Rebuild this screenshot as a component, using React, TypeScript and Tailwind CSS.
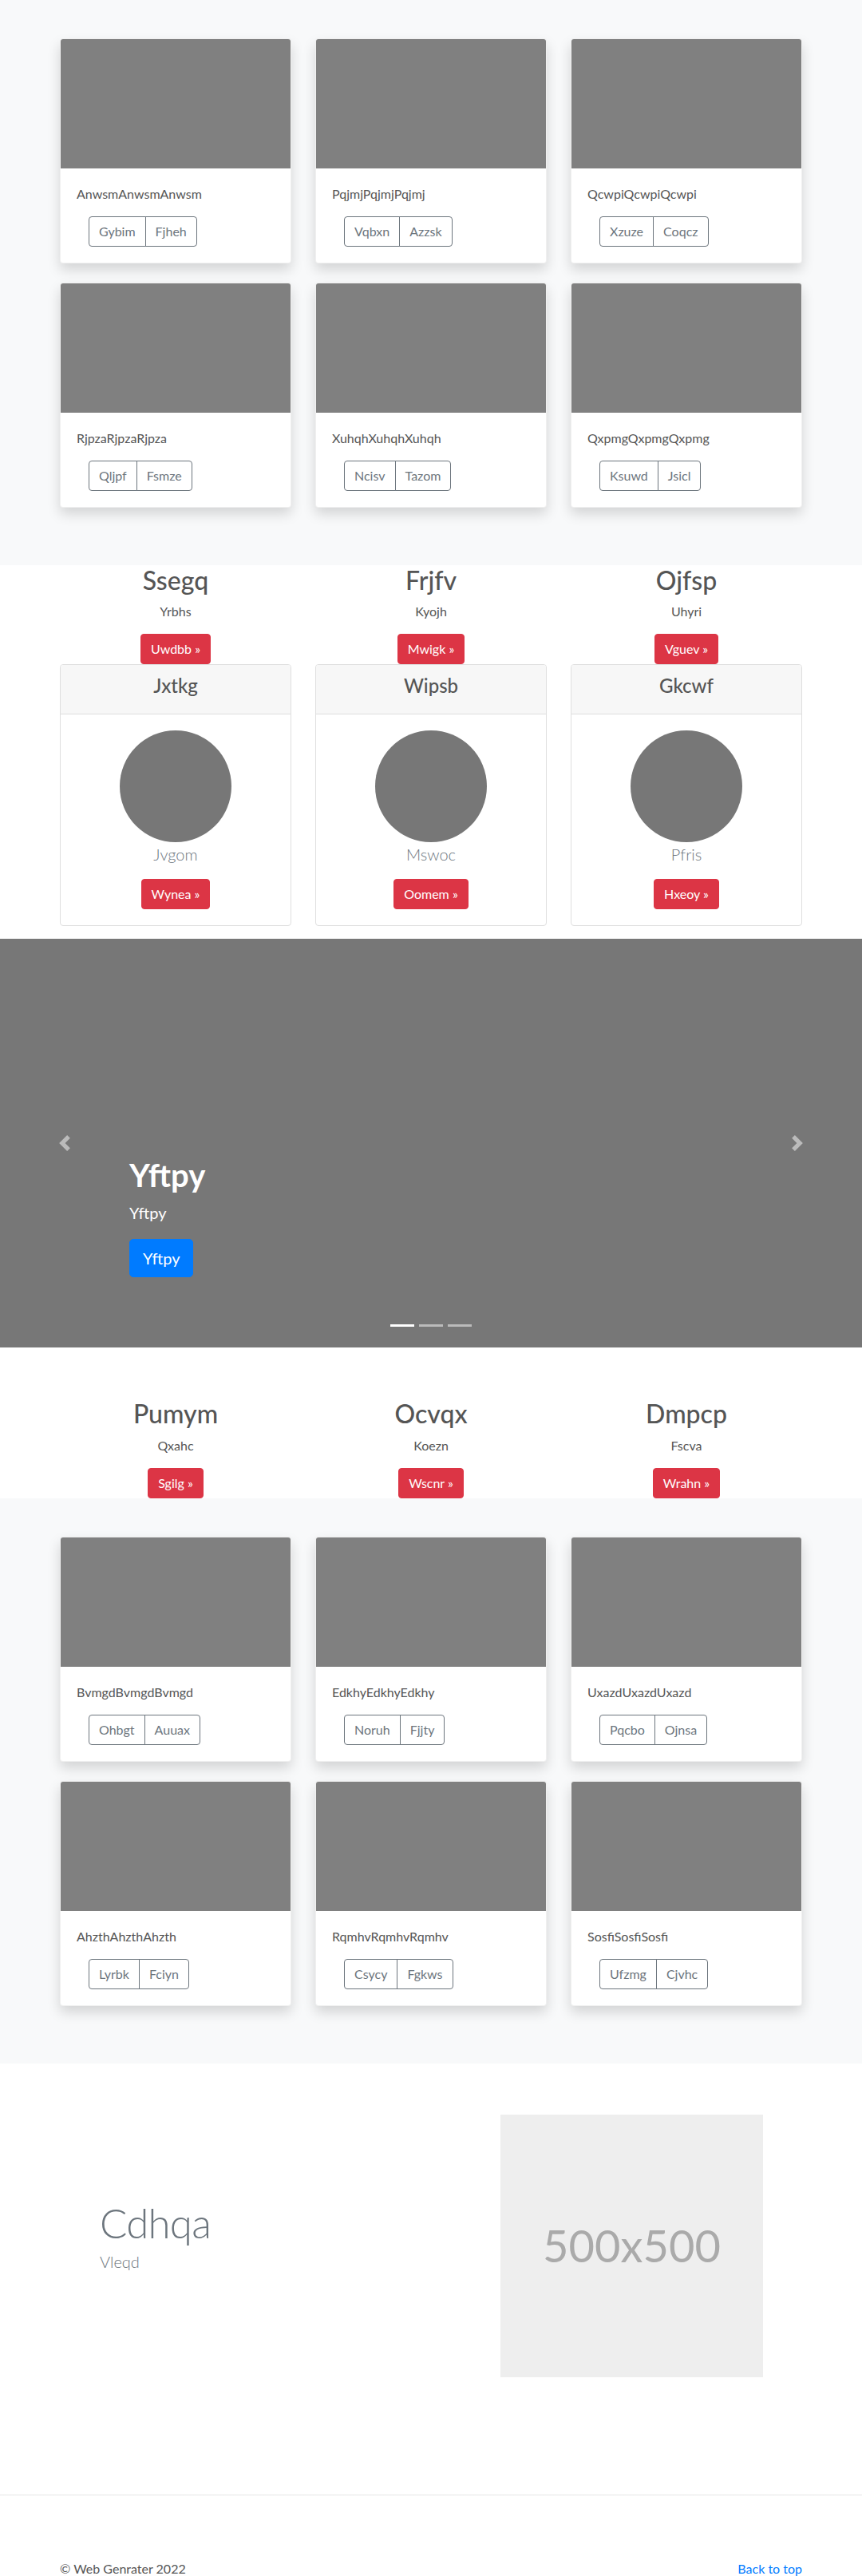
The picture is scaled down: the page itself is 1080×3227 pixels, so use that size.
import React from "react";

const FONT = "font-['Lato','Liberation_Sans',sans-serif]";

type Album = { title: string; a: string; b: string };

const album1: Album[] = [
  { title: "AnwsmAnwsmAnwsm", a: "Gybim", b: "Fjheh" },
  { title: "PqjmjPqjmjPqjmj", a: "Vqbxn", b: "Azzsk" },
  { title: "QcwpiQcwpiQcwpi", a: "Xzuze", b: "Coqcz" },
  { title: "RjpzaRjpzaRjpza", a: "Qljpf", b: "Fsmze" },
  { title: "XuhqhXuhqhXuhqh", a: "Ncisv", b: "Tazom" },
  { title: "QxpmgQxpmgQxpmg", a: "Ksuwd", b: "Jsicl" },
];

const album2: Album[] = [
  { title: "BvmgdBvmgdBvmgd", a: "Ohbgt", b: "Auuax" },
  { title: "EdkhyEdkhyEdkhy", a: "Noruh", b: "Fjjty" },
  { title: "UxazdUxazdUxazd", a: "Pqcbo", b: "Ojnsa" },
  { title: "AhzthAhzthAhzth", a: "Lyrbk", b: "Fciyn" },
  { title: "RqmhvRqmhvRqmhv", a: "Csycy", b: "Fgkws" },
  { title: "SosfiSosfiSosfi", a: "Ufzmg", b: "Cjvhc" },
];

function AlbumCard({ item }: { item: Album }) {
  return (
    <div className="bg-white border border-[rgba(0,0,0,0.06)] rounded-[4px] shadow-[0_8px_16px_rgba(0,0,0,0.15)] overflow-hidden">
      <div className="h-[162px] bg-[#808080]" />
      <div className="p-5">
        <p className="text-base leading-6 text-[#555] mb-4">{item.title}</p>
        <div className="ml-[15px] flex">
          <span className="px-3 py-1.5 text-base leading-6 text-[#6c757d] border border-[#6c757d] rounded-l-[4px]">
            {item.a}
          </span>
          <span className="-ml-px px-3 py-1.5 text-base leading-6 text-[#6c757d] border border-[#6c757d] rounded-r-[4px]">
            {item.b}
          </span>
        </div>
      </div>
    </div>
  );
}

function AlbumSection({ items }: { items: Album[] }) {
  return (
    <section className="bg-[#f8f9fa] pt-12 pb-12">
      <div className="w-[960px] mx-auto px-[15px]">
        <div className="grid grid-cols-3 gap-x-[30px] gap-y-6 pb-6">
          {items.map((it) => (
            <AlbumCard key={it.title} item={it} />
          ))}
        </div>
      </div>
    </section>
  );
}

function RedButton({ label }: { label: string }) {
  return (
    <span className="inline-block px-3 py-1.5 text-base leading-6 text-white bg-[#dc3545] border border-[#dc3545] rounded-[4px]">
      {label} »
    </span>
  );
}

type Feature = { h: string; p: string; btn: string };

function FeatureCol({ f }: { f: Feature }) {
  return (
    <div className="flex flex-col items-center text-center">
      <h2 className="text-[32px] leading-[1.2] font-medium text-[#555] mb-2">{f.h}</h2>
      <p className="text-base leading-6 text-[#555] mb-4">{f.p}</p>
      <RedButton label={f.btn} />
    </div>
  );
}

const features1: (Feature & { ch: string; cp: string; cb: string })[] = [
  { h: "Ssegq", p: "Yrbhs", btn: "Uwdbb", ch: "Jxtkg", cp: "Jvgom", cb: "Wynea" },
  { h: "Frjfv", p: "Kyojh", btn: "Mwigk", ch: "Wipsb", cp: "Mswoc", cb: "Oomem" },
  { h: "Ojfsp", p: "Uhyri", btn: "Vguev", ch: "Gkcwf", cp: "Pfris", cb: "Hxeoy" },
];

const features2: Feature[] = [
  { h: "Pumym", p: "Qxahc", btn: "Sgilg" },
  { h: "Ocvqx", p: "Koezn", btn: "Wscnr" },
  { h: "Dmpcp", p: "Fscva", btn: "Wrahn" },
];

function PrevIcon() {
  return (
    <svg width="20" height="20" viewBox="0 0 8 8" fill="#fff">
      <path d="M5.25 0l-4 4 4 4 1.5-1.5L4.25 4l2.5-2.5L5.25 0z" />
    </svg>
  );
}

function NextIcon() {
  return (
    <svg width="20" height="20" viewBox="0 0 8 8" fill="#fff">
      <path d="M2.75 0l-1.5 1.5L3.75 4l-2.5 2.5L2.75 8l4-4-4-4z" />
    </svg>
  );
}

export default function App() {
  return (
    <div className={`w-[1080px] bg-white ${FONT}`}>
      <AlbumSection items={album1} />

      {/* Features with cards */}
      <section className="bg-white pb-4">
        <div className="w-[960px] mx-auto px-[15px]">
          <div className="grid grid-cols-3 gap-x-[30px]">
            {features1.map((f) => (
              <div key={f.h} className="flex flex-col items-stretch">
                <FeatureCol f={f} />
                <div className="border border-[#dfdfdf] rounded-[4px] bg-white overflow-hidden">
                  <div className="bg-[#f7f7f7] border-b border-[#dfdfdf] px-5 py-3 text-center">
                    <h4 className="text-2xl leading-[1.2] font-medium text-[#555] mb-2">{f.ch}</h4>
                  </div>
                  <div className="p-5 flex flex-col items-center text-center">
                    <div className="w-[140px] h-[140px] rounded-full bg-[#777]" />
                    <p className="text-xl leading-[1.5] font-light text-[#6c757d] mb-4">{f.cp}</p>
                    <RedButton label={f.cb} />
                  </div>
                </div>
              </div>
            ))}
          </div>
        </div>
      </section>

      {/* Carousel */}
      <section className="relative h-[512px] bg-[#777] mb-16 overflow-hidden">
        <div className="absolute left-0 top-0 bottom-0 w-[15%] flex items-center justify-center opacity-50">
          <PrevIcon />
        </div>
        <div className="absolute right-0 top-0 bottom-0 w-[15%] flex items-center justify-center opacity-50">
          <NextIcon />
        </div>
        <div className="absolute left-[15%] right-[15%] bottom-[88px] flex flex-col items-start text-white">
          <h1 className="text-[40px] leading-[1.2] font-bold mb-2">Yftpy</h1>
          <p className="text-xl leading-[1.5] mb-[18px]">Yftpy</p>
          <span className="inline-block px-4 py-2 text-xl leading-[1.5] text-white bg-[#007bff] border border-[#007bff] rounded-[5px]">
            Yftpy
          </span>
        </div>
        <div className="absolute left-0 right-0 bottom-[26px] flex justify-center gap-[6px]">
          <span className="w-[30px] h-[3px] bg-white" />
          <span className="w-[30px] h-[3px] bg-white/50" />
          <span className="w-[30px] h-[3px] bg-white/50" />
        </div>
      </section>

      {/* Features plain */}
      <section className="bg-white">
        <div className="w-[960px] mx-auto px-[15px]">
          <div className="grid grid-cols-3 gap-x-[30px]">
            {features2.map((f) => (
              <FeatureCol key={f.h} f={f} />
            ))}
          </div>
        </div>
      </section>

      <AlbumSection items={album2} />

      {/* Featurette */}
      <section className="bg-white pt-[64px] pb-[147px]">
        <div className="w-[960px] mx-auto px-[15px] flex items-center">
          <div className="flex-1 pl-[50px] pb-[19px]">
            <h2 className="text-[51px] leading-none font-light tracking-[-0.8px] text-[#6c757d] mb-2">Cdhqa</h2>
            <p className="text-xl leading-[1.5] font-light text-[#6c757d]">Vleqd</p>
          </div>
          <div className="w-[329px] h-[329px] mr-[49px] bg-[#eee] flex items-center justify-center">
            <span className="text-[56px] leading-none text-[#aaa]">500x500</span>
          </div>
        </div>
      </section>

      {/* Footer */}
      <footer className="border-t border-[#e5e5e5] pt-[80px]">
        <div className="w-[960px] mx-auto px-[15px] flex justify-between">
          <p className="text-base leading-6 text-[#555]">© Web Genrater 2022</p>
          <a className="text-base leading-6 text-[#007bff]">Back to top</a>
        </div>
      </footer>
    </div>
  );
}
